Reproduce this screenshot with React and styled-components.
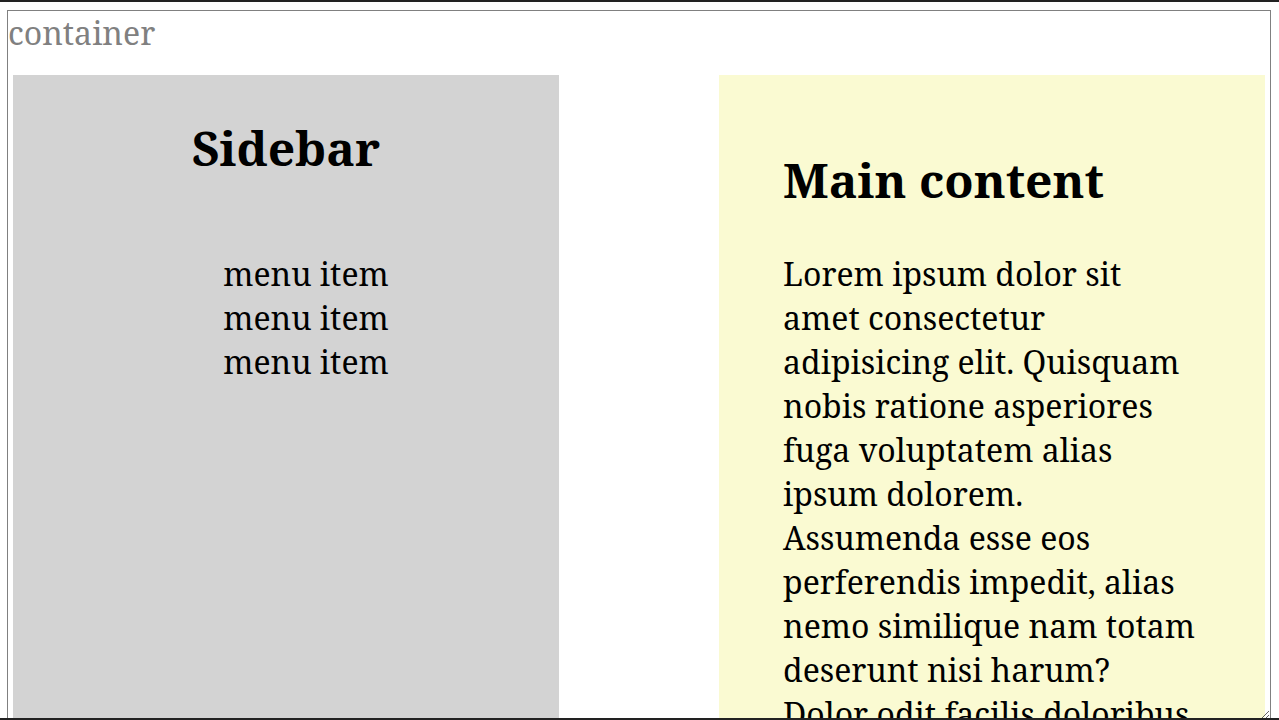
import React from "react";
import styled, { createGlobalStyle } from "styled-components";

const Global = createGlobalStyle`
  html {
    border-top: 2px solid #222;
    height: 100%;
    box-sizing: border-box;
  }
  body {
    margin: 8px 8px 0 7px;
    font-family: "Noto Serif", serif;
    font-size: 32px;
    line-height: 44px;
    color: #000;
    background: #fff;
    overflow: hidden;
  }
`;

const Container = styled.div`
  border: 1px solid gray;
  height: calc(100vh - 10px);
  box-sizing: border-box;
  overflow: hidden;
  resize: both;
`;

const Label = styled.div`
  color: gray;
  line-height: normal;
`;

const Grid = styled.div`
  display: grid;
  grid-template-columns: 1fr 1fr;
  column-gap: 160px;
  padding: 21px 5px 0;
`;

const Sidebar = styled.aside`
  background: lightgray;
  text-align: center;
  display: flex;
  flex-direction: column;
`;

const Heading = styled.h2`
  font-size: 1.5em;
  font-weight: bold;
  line-height: normal;
  margin: 0.83em 0;
`;

const Menu = styled.ul`
  list-style: none;
  padding-left: 40px;
  margin: 1em 0;
`;

const MenuItem = styled.li``;

const Main = styled.main`
  background: lightgoldenrodyellow;
  padding: 1em 2em;
`;

const Para = styled.p`
  margin: 1em 0;
`;

const BottomBar = styled.div`
  position: fixed;
  left: 0;
  right: 0;
  bottom: 0;
  height: 2px;
  background: #222;
`;

export default function App() {
  return (
    <>
      <Global />
      <Container>
        <Label>container</Label>
        <Grid>
          <Sidebar>
            <Heading>Sidebar</Heading>
            <Menu>
              <MenuItem>menu item</MenuItem>
              <MenuItem>menu item</MenuItem>
              <MenuItem>menu item</MenuItem>
            </Menu>
          </Sidebar>
          <Main>
            <Heading>Main content</Heading>
            <Para>
              Lorem ipsum dolor sit amet consectetur adipisicing elit. Quisquam
              nobis ratione asperiores fuga voluptatem alias ipsum dolorem.
              Assumenda esse eos perferendis impedit, alias nemo similique nam
              totam deserunt nisi harum? Dolor odit facilis doloribus
              perspiciatis.
            </Para>
          </Main>
        </Grid>
      </Container>
      <BottomBar />
    </>
  );
}
